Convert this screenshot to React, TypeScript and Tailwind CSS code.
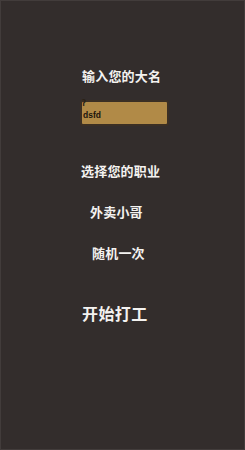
import React from "react";

const font = { fontFamily: '"Noto Sans CJK SC", "Noto Sans", sans-serif' };

export default function App() {
  return (
    <div
      className="w-[245px] h-[450px] bg-[#332d2c] border border-[#423c3b] box-border flex flex-col text-[#f4f2f0] font-bold"
      style={font}
    >
      <div className="pt-[67px] pl-[81px] text-[13px] leading-[16px] tracking-[0.2px]">输入您的大名</div>
      <div className="mt-[16px] ml-[79px] relative w-[89px] h-[26px] bg-[#b18a47] border-[2px] border-[#3b2f24] rounded-[3px] flex items-center">
        <span className="absolute left-[0px] top-[-3px] text-[8px] leading-[8px] text-[#2a2216] font-bold">ʔ</span>
        <span
          className="pl-[1px] pt-[3px] text-[8.5px] leading-[10px] text-[#1a140c] font-bold"
          style={{ fontFamily: '"Liberation Sans", sans-serif' }}
        >
          dsfd
        </span>
      </div>
      <div className="mt-[37px] pl-[80px] text-[13px] leading-[16px] tracking-[0.2px]">选择您的职业</div>
      <div className="mt-[25px] pl-[89px] text-[13px] leading-[16px] tracking-[0.2px]">外卖小哥</div>
      <div className="mt-[25px] pl-[91px] text-[13px] leading-[16px] tracking-[0.2px]">随机一次</div>
      <div className="mt-[42px] pl-[81px] text-[16px] leading-[20px] tracking-[0.4px]">开始打工</div>
    </div>
  );
}
